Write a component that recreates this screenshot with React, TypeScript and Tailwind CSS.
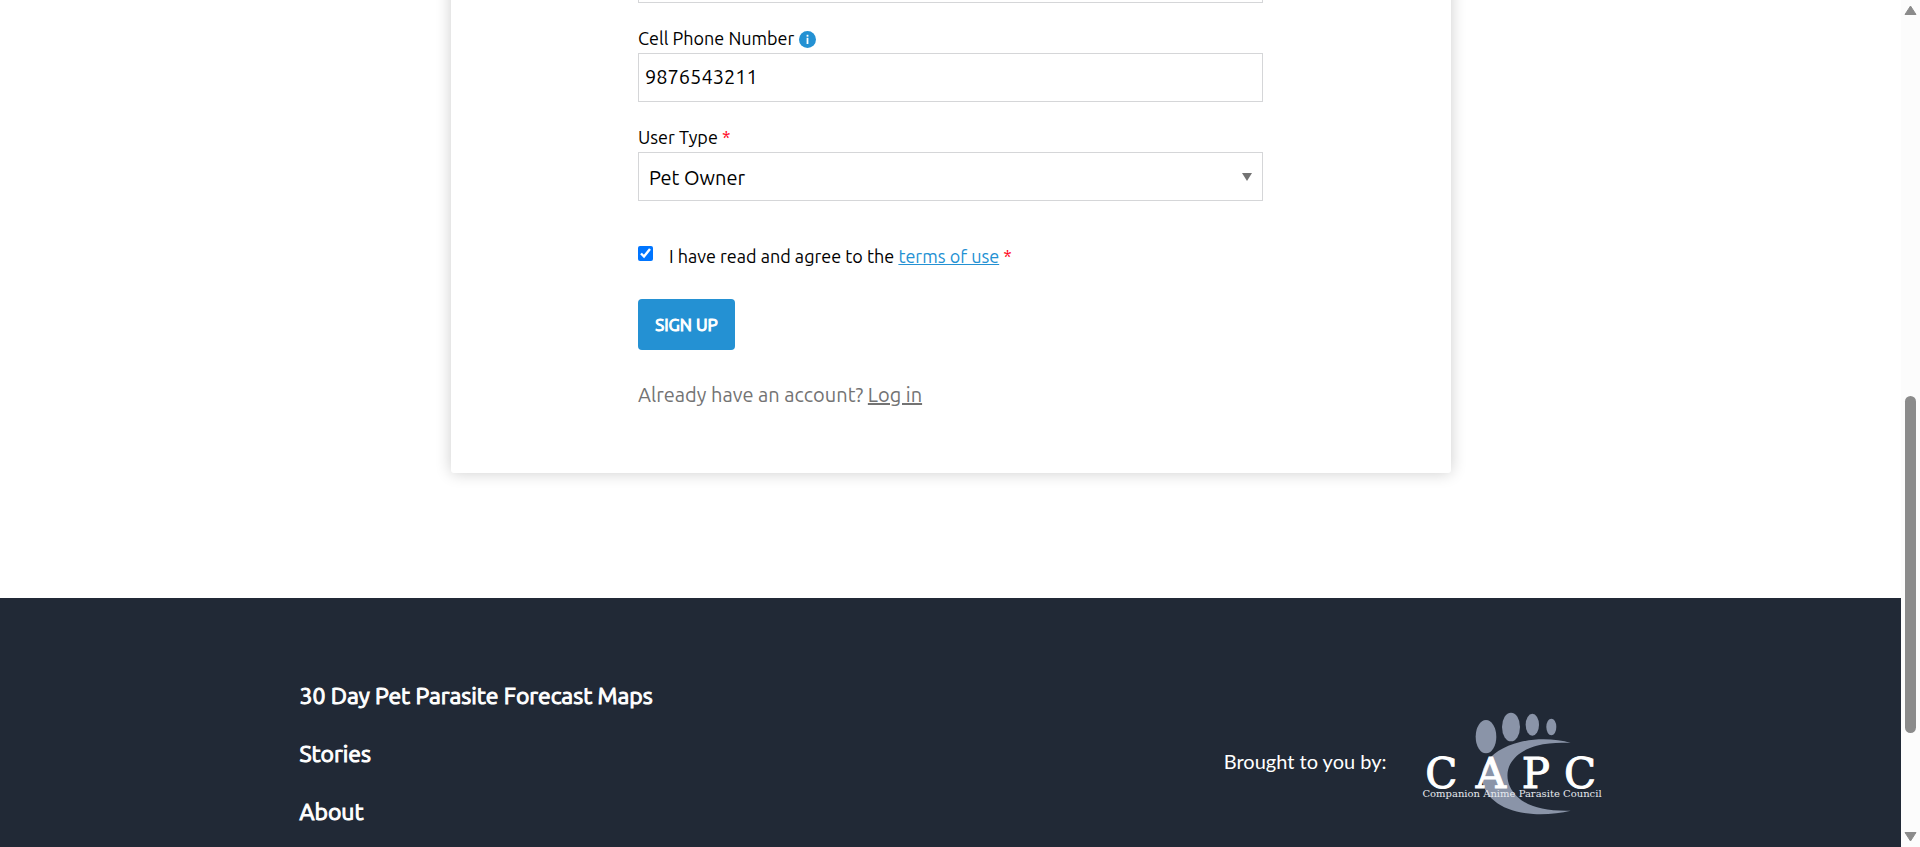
import type { ReactNode } from "react";

const footerLinks = ["30 Day Pet Parasite Forecast Maps", "Stories", "About"];

const scroll = { before: 380, thumb: 337, after: 98 };

const fieldClass =
  "block h-[49px] w-full rounded-none border border-[#d5d6d8] bg-white text-[20px] text-black outline-none";

function FieldLabel({ htmlFor, children }: { htmlFor: string; children: ReactNode }) {
  return (
    <label htmlFor={htmlFor} className="flex h-7 items-center pb-[2px] text-[18px] leading-[26px] text-black">
      {children}
    </label>
  );
}

function Required() {
  return <span className="text-[#ff0018]">&nbsp;*</span>;
}

function InfoIcon() {
  return (
    <svg viewBox="0 0 17 17" className="mt-[2px] ml-[5px] size-[17px]" aria-hidden="true">
      <circle cx="8.5" cy="8.5" r="8.5" fill="#2491d3" />
      <rect x="7.6" y="3.8" width="1.8" height="1.9" fill="#fff" />
      <rect x="7.6" y="6.8" width="1.8" height="6.2" fill="#fff" />
    </svg>
  );
}

function CapcLogo() {
  return (
    <svg viewBox="66 36 540 309" className="h-[103px] w-[180px]" role="img" aria-label="CAPC">
      <g fill="#8a94a8">
        <ellipse cx="258" cy="110" rx="31" ry="50" />
        <ellipse cx="333" cy="81" rx="27" ry="43" />
        <ellipse cx="397" cy="74" rx="20" ry="33" />
        <ellipse cx="454" cy="81" rx="15" ry="25" />
        <path d="M512 129 C470 116 410 114 360 126 C290 143 246 184 246 230 C247 292 310 337 400 342 C440 344 480 340 512 332 C440 334 385 322 352 290 C328 266 320 242 323 216 C328 180 362 150 410 137 C445 128 480 127 512 129 Z" />
      </g>
      <g
        fill="#fff"
        stroke="#fff"
        strokeWidth="3"
        textAnchor="middle"
        className="font-['DejaVu_Serif',serif] text-[126px]"
      >
        <text x="124" y="263">C</text>
        <text x="273" y="263">A</text>
        <text x="408" y="263">P</text>
        <text x="540" y="263">C</text>
      </g>
      <text
        x="336"
        y="292"
        fill="#e6e9ef"
        textAnchor="middle"
        className="font-['DejaVu_Serif',serif] text-[30px]"
      >
        Companion Anime Parasite Council
      </text>
    </svg>
  );
}

function ScrollRail() {
  return (
    <div className="flex w-[19px] shrink-0 flex-col items-center bg-[#fcfcfc] py-[5px]" aria-hidden="true">
      <svg viewBox="0 0 13 11" className="h-[11px] w-[13px] shrink-0">
        <path d="M6.5 1 L12 9.5 H1 Z" fill="#8b8b8b" stroke="#8b8b8b" strokeLinejoin="round" />
      </svg>
      <div style={{ flexGrow: scroll.before }} />
      <div className="w-[11px] rounded-full bg-[#8b8b8b]" style={{ flexGrow: scroll.thumb }} />
      <div style={{ flexGrow: scroll.after }} />
      <svg viewBox="0 0 13 11" className="h-[11px] w-[13px] shrink-0">
        <path d="M6.5 10 L12 1.5 H1 Z" fill="#8b8b8b" stroke="#8b8b8b" strokeLinejoin="round" />
      </svg>
    </div>
  );
}

export default function App() {
  return (
    <div className="flex min-h-screen overflow-hidden bg-white font-[Ubuntu,'Noto_Sans',sans-serif]">
      <div className="flex min-w-0 grow flex-col">
        <main className="pb-[125px]">
          <div className="mx-auto -mt-[46px] max-w-[1000px] rounded-[3px] bg-white pb-16 shadow-[0_0_16px_rgba(0,0,0,0.2)]">
            <form className="mx-auto flex max-w-[625px] flex-col" onSubmit={(e) => e.preventDefault()}>
              <input type="text" aria-label="Additional details" className={`${fieldClass} px-[6px]`} />

              <div className="mt-[22px]">
                <FieldLabel htmlFor="phone">
                  Cell Phone Number
                  <InfoIcon />
                </FieldLabel>
                <input
                  id="phone"
                  type="tel"
                  defaultValue="9876543211"
                  className={`${fieldClass} px-[6px] pb-[2px]`}
                />
              </div>

              <div className="mt-[22px]">
                <FieldLabel htmlFor="user-type">
                  User Type
                  <Required />
                </FieldLabel>
                <div className="relative">
                  <select id="user-type" className={`${fieldClass} appearance-none px-[10px] pt-[2px]`}>
                    <option>Pet Owner</option>
                  </select>
                  <svg
                    viewBox="0 0 10 8"
                    className="pointer-events-none absolute top-[21px] right-[11px] h-2 w-[10px]"
                    aria-hidden="true"
                  >
                    <path d="M0 0 H10 L5 8 Z" fill="#737373" />
                  </svg>
                </div>
              </div>

              <div className="mt-[41px] flex items-start gap-4 text-[18px] leading-7 text-black">
                <input id="agree" type="checkbox" defaultChecked className="mt-1 size-[15px] accent-[#0075ff]" />
                <label htmlFor="agree">
                  I have read and agree to the{" "}
                  <a href="#terms" className="text-[#2491d3] underline">
                    terms of use
                  </a>
                  <Required />
                </label>
              </div>

              <button
                type="submit"
                className="mt-[29px] h-[51px] w-[97px] self-start rounded-[4px] bg-[#2491d3] text-[17px] text-white [-webkit-text-stroke:1px_white]"
              >
                SIGN UP
              </button>

              <p className="mt-[31px] text-[20px] leading-7 text-[#737373]">
                Already have an account?{" "}
                <a href="#login" className="underline">
                  Log in
                </a>
              </p>
            </form>
          </div>
        </main>

        <footer className="grow bg-[#212936] pt-[83px] text-white">
          <div className="mx-auto flex max-w-[1302px] justify-between">
            <nav className="flex flex-col gap-7">
              {footerLinks.map((label) => (
                <a
                  key={label}
                  href="#footer"
                  className="text-[23px] leading-[30px] [-webkit-text-stroke:1px_white]"
                >
                  {label}
                </a>
              ))}
            </nav>
            <div className="flex items-center gap-[35px] pt-[18px]">
              <span className="pb-1 font-[Lato,sans-serif] text-[20px]">Brought to you by:</span>
              <CapcLogo />
            </div>
          </div>
        </footer>
      </div>
      <ScrollRail />
    </div>
  );
}
